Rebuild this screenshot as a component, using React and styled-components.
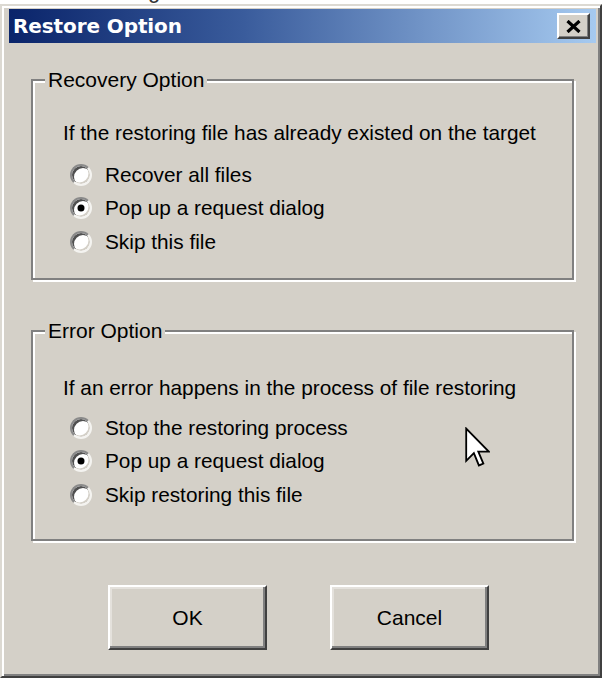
import React from 'react';
import styled, { createGlobalStyle } from 'styled-components';

const GlobalStyle = createGlobalStyle`
  html, body { margin: 0; padding: 0; background: #fff; }
  body { font-family: "Liberation Sans", Arial, sans-serif; }
`;

const Page = styled.div`
  position: relative;
  width: 604px;
  height: 682px;
  overflow: hidden;
  background: #fff;
`;

const TopStrip = styled.div`
  height: 4px;
  overflow: hidden;
  padding-left: 148px;
`;

const CutText = styled.div`
  font-family: "Liberation Sans", Arial, sans-serif;
  font-size: 22px;
  line-height: 22px;
  margin-top: -20px;
  color: #333;
`;

const Window = styled.div`
  box-sizing: border-box;
  width: 602px;
  background: #d4d0c8;
  border: 2px solid;
  border-color: #dcd9d2 #404040 #404040 #dcd9d2;
  box-shadow: inset 2px 2px 0 #fff, inset -2px -2px 0 #808080;
  padding: 3px 4px 4px 7px;
`;

const TitleBar = styled.div`
  height: 34px;
  display: flex;
  align-items: center;
  justify-content: space-between;
  padding: 0 6px 0 4px;
  background: linear-gradient(90deg, #0a246a 0%, #3a5c9c 40%, #a6caf0 100%);
`;

const TitleText = styled.span`
  font-family: "DejaVu Sans", Verdana, sans-serif;
  font-weight: bold;
  font-size: 20px;
  color: #fff;
  letter-spacing: -0.1px;
`;

const CloseButton = styled.button`
  box-sizing: border-box;
  width: 33px;
  height: 26px;
  padding: 0;
  display: flex;
  align-items: center;
  justify-content: center;
  background: #d4d0c8;
  border: 2px solid;
  border-color: #fff #404040 #404040 #fff;
  box-shadow: inset -1px -1px 0 #808080;
`;

const Body = styled.div`
  padding: 25px 22px 22px 22px;
  display: flex;
  flex-direction: column;
`;

const Group = styled.fieldset`
  margin: ${p => p.$mt}px 0 0 0;
  padding: 0;
  min-width: 0;
  border: 2px solid #808080;
  box-shadow: inset 2px 2px 0 #fff, 2px 2px 0 #fff;
`;

const Legend = styled.legend`
  margin-left: 12px;
  padding: 0 3px;
  font-size: 21px;
  line-height: 24px;
  color: #000;
  background: #d4d0c8;
`;

const GroupContent = styled.div`
  padding: ${p => p.$top}px 0 ${p => p.$bottom}px 30px;
`;

const Description = styled.div`
  font-size: 20.8px;
  line-height: 24px;
  color: #000;
  white-space: nowrap;
`;

const RadioList = styled.div`
  margin-top: ${p => p.$gap}px;
  padding-left: 7px;
  display: flex;
  flex-direction: column;
`;

const RadioRow = styled.label`
  height: 33.5px;
  display: flex;
  align-items: center;
  gap: 13px;
  font-size: 20.8px;
  color: #000;
  white-space: nowrap;
`;

const Radio = styled.span`
  position: relative;
  box-sizing: border-box;
  width: 22px;
  height: 22px;
  flex: none;
  border-radius: 50%;
  background: #fff;
  border: 2px solid;
  border-color: #8a8a8a #f4f3f0 #f4f3f0 #8a8a8a;
  box-shadow: inset 2px 2px 0 #505050, inset -1.5px -1.5px 0 #d4d0c8;

  &::after {
    content: '';
    display: ${p => (p.$checked ? 'block' : 'none')};
    position: absolute;
    width: 7px;
    height: 7px;
    border-radius: 50%;
    background: #000;
    top: 50%;
    left: 50%;
    transform: translate(-50%, -50%);
  }
`;

const ButtonRow = styled.div`
  margin-top: 44px;
  padding-left: 77px;
  display: flex;
  gap: 63px;
`;

const Button = styled.button`
  box-sizing: border-box;
  width: 159px;
  height: 65px;
  background: #d4d0c8;
  border: 2px solid;
  border-color: #fff #404040 #404040 #fff;
  box-shadow: inset -2px -2px 0 #808080, inset 2px 2px 0 #e4e1dc;
  font-family: "Liberation Sans", Arial, sans-serif;
  font-size: 21px;
  color: #000;
  padding: 0;
`;

const Cursor = styled.svg`
  position: absolute;
  left: 465px;
  top: 427px;
`;

const recovery = ['Recover all files', 'Pop up a request dialog', 'Skip this file'];
const errors = ['Stop the restoring process', 'Pop up a request dialog', 'Skip restoring this file'];

function OptionGroup({ title, description, options, checked, mt, top, gap, bottom }) {
  return (
    <Group $mt={mt}>
      <Legend>{title}</Legend>
      <GroupContent $top={top} $bottom={bottom}>
        <Description>{description}</Description>
        <RadioList $gap={gap}>
          {options.map((o, i) => (
            <RadioRow key={o}>
              <Radio $checked={i === checked} />
              {o}
            </RadioRow>
          ))}
        </RadioList>
      </GroupContent>
    </Group>
  );
}

export default function App() {
  return (
    <Page>
      <GlobalStyle />
      <TopStrip>
        <CutText>g</CutText>
      </TopStrip>
      <Window>
        <TitleBar>
          <TitleText>Restore Option</TitleText>
          <CloseButton aria-label="Close">
            <svg width="15" height="13" viewBox="0 0 15 13">
              <path d="M1.5 1 L13.5 12 M13.5 1 L1.5 12" stroke="#000" strokeWidth="3.2" fill="none" />
            </svg>
          </CloseButton>
        </TitleBar>
        <Body>
          <OptionGroup
            title="Recovery Option"
            description="If the restoring file has already existed on the target"
            options={recovery}
            checked={1}
            mt={0}
            top={29}
            gap={13}
            bottom={19.5}
          />
          <OptionGroup
            title="Error Option"
            description="If an error happens in the process of file restoring"
            options={errors}
            checked={1}
            mt={39}
            top={33}
            gap={11}
            bottom={27.5}
          />
          <ButtonRow>
            <Button>OK</Button>
            <Button>Cancel</Button>
          </ButtonRow>
        </Body>
      </Window>
      <Cursor width="25" height="41" viewBox="0 0 12.4 20">
        <path
          d="M0.6 0.6 L0.6 16.6 L4.4 12.8 L6.9 18.9 L9.1 18 L6.6 12 L11.8 12 Z"
          fill="#fff"
          stroke="#000"
          strokeWidth="0.9"
          strokeLinejoin="miter"
        />
      </Cursor>
    </Page>
  );
}
